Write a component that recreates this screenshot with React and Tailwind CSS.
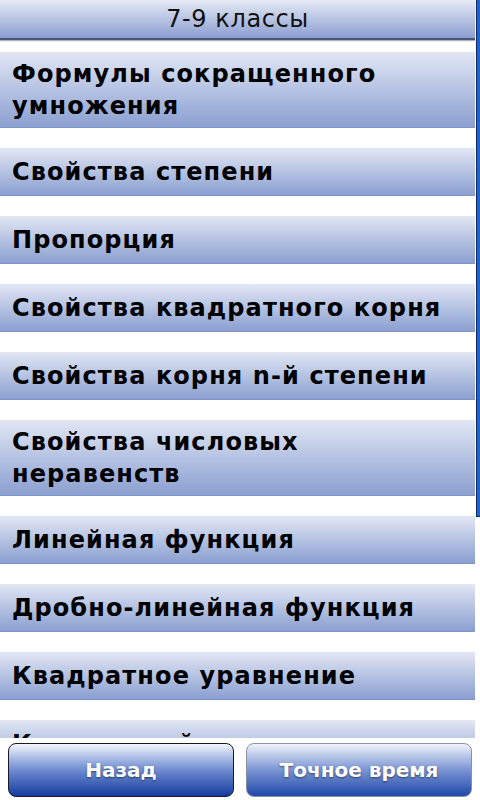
import React from "react";

const rows = [
  ["Формулы сокращенного", "умножения"],
  ["Свойства степени"],
  ["Пропорция"],
  ["Свойства квадратного корня"],
  ["Свойства корня n-й степени"],
  ["Свойства числовых", "неравенств"],
  ["Линейная функция"],
  ["Дробно-линейная функция"],
  ["Квадратное уравнение"],
  ["Квадратный трехчлен"],
];

function Row({ lines }) {
  return (
    <div
      className={`mt-[20px] flex flex-col justify-center bg-gradient-to-b from-[#e2e7f4] to-[#8b9fd0] border-b border-[#8094c8] pl-[12px] text-[24px] font-bold leading-[32px] tracking-[1.1px] text-black ${
        lines.length > 1 ? "h-[76px]" : "h-[48px]"
      }`}
    >
      {lines.map((l) => (
        <div key={l} className="whitespace-nowrap">
          {l}
        </div>
      ))}
    </div>
  );
}

export default function App() {
  return (
    <div
      className="w-[480px] h-[800px] flex flex-col bg-white overflow-hidden"
      style={{ fontFamily: '"DejaVu Sans", Verdana, sans-serif' }}
    >
      <div className="h-[738px] flex overflow-hidden">
        <div className="w-[475px] flex flex-col">
          <div className="h-[40px] shrink-0 flex items-center justify-center bg-gradient-to-b from-[#e6eaf5] to-[#8c9ed0] border-b-2 border-[#46557a] text-[24px] tracking-[0.6px] text-[#111] shadow-[0_1px_1px_rgba(0,0,0,0.3)]">
            7-9 классы
          </div>
          <div className="-mt-[8px] flex flex-col shrink-0">
            {rows.map((r) => (
              <Row key={r[0]} lines={r} />
            ))}
          </div>
        </div>
        <div className="w-[1px]" />
        <div className="w-[4px]">
          <div className="h-[517px] bg-[#1f63d0] border-l border-b border-[#0b2a6a]" />
        </div>
      </div>
      <div className="flex-1 flex gap-[12px] px-[8px] pt-[5px] pb-[3px]">
        <button className="relative flex-1 rounded-[8px] border border-[#1a1a2a] bg-gradient-to-b from-[#f4f6fb] via-[#6f8bd0] to-[#143b9e] overflow-hidden text-white text-[20px] font-bold [text-shadow:0_1px_2px_rgba(0,0,0,0.5)]">
          <span className="relative">Назад</span>
        </button>
        <button className="relative flex-1 rounded-[8px] border border-[#8a90a8] bg-gradient-to-b from-[#f2f4fa] via-[#7a93d2] to-[#2048a8] overflow-hidden text-white text-[20px] font-bold [text-shadow:0_1px_2px_rgba(0,0,0,0.5)]">
          <span className="relative">Точное время</span>
        </button>
      </div>
    </div>
  );
}
